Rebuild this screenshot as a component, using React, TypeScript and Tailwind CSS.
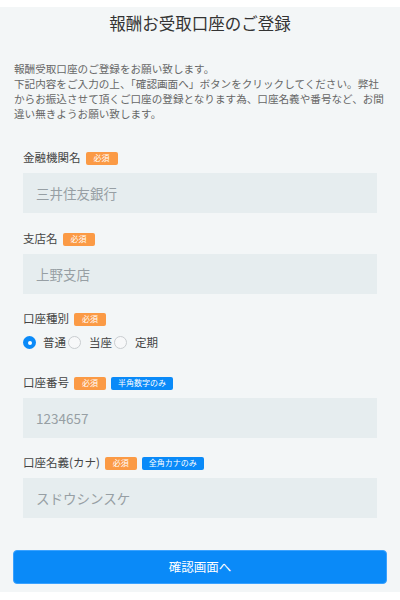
import React from "react";

const font = { fontFamily: '"Noto Sans CJK JP", "Noto Sans", sans-serif' };

function Badge({ children, tone = "orange" }: { children: React.ReactNode; tone?: "orange" | "blue" }) {
  const color = tone === "orange" ? "bg-[#fb9a45] w-[32px]" : "bg-[#0a8af8] px-[7px]";
  return (
    <span className={`${color} inline-flex h-[13px] items-center justify-center rounded-[2px] text-[8px] leading-none text-white`}>
      {children}
    </span>
  );
}

function FieldLabel({ label, badges }: { label: string; badges: React.ReactNode }) {
  return (
    <div className="flex h-[14px] items-center gap-[5px]">
      <span className="text-[11.5px] leading-none text-[#444]">{label}</span>
      {badges}
    </div>
  );
}

function Field({ label, value, extra }: { label: string; value: string; extra?: string }) {
  return (
    <div>
      <FieldLabel
        label={label}
        badges={
          <>
            <Badge>必須</Badge>
            {extra && <Badge tone="blue">{extra}</Badge>}
          </>
        }
      />
      <div className="mt-[8px] flex h-[40px] items-center bg-[#e6edef] pl-[13px] text-[13.5px] text-[#979fa4]">
        {value}
      </div>
    </div>
  );
}

function Radio({ checked }: { checked?: boolean }) {
  if (checked) {
    return (
      <span className="flex h-[13px] w-[13px] items-center justify-center rounded-full bg-[#0a8af8]">
        <span className="h-[4px] w-[4px] rounded-full bg-white" />
      </span>
    );
  }
  return <span className="h-[13px] w-[13px] rounded-full border border-[#c9cdd0] bg-[#f7f8f9]" />;
}

export default function App() {
  return (
    <div className="min-h-[600px] bg-white pt-[7px]" style={font}>
      <div className="h-[585px] bg-[#f3f6f7] pt-[3px]">
        <h1 className="text-center text-[16.5px] leading-[26px] text-[#333]">報酬お受取口座のご登録</h1>

        <p className="mt-[25px] px-[14px] text-[10.6px] leading-[15px] text-[#666]">
          <span className="block">報酬受取口座のご登録をお願い致します。</span>
          <span className="block">下記内容をご入力の上、「確認画面へ」ボタンをクリックしてください。弊社</span>
          <span className="block">からお振込させて頂くご口座の登録となります為、口座名義や番号など、お間</span>
          <span className="block">違い無きようお願い致します。</span>
        </p>

        <div className="mt-[30px] px-[23px]">
          <Field label="金融機関名" value="三井住友銀行" />

          <div className="mt-[19px]">
            <Field label="支店名" value="上野支店" />
          </div>

          <div className="mt-[18px]">
            <FieldLabel label="口座種別" badges={<Badge>必須</Badge>} />
            <div className="mt-[10px] flex items-center text-[11.5px] leading-none text-[#444]">
              <Radio checked />
              <span className="ml-[7px] mr-[2px]">普通</span>
              <Radio />
              <span className="ml-[8px] mr-[2px]">当座</span>
              <Radio />
              <span className="ml-[8px]">定期</span>
            </div>
          </div>

          <div className="mt-[27px]">
            <Field label="口座番号" value="1234657" extra="半角数字のみ" />
          </div>

          <div className="mt-[18px]">
            <Field label="口座名義(カナ)" value="スドウシンスケ" extra="全角カナのみ" />
          </div>
        </div>

        <div className="mt-[32px] px-[13px]">
          <button className="flex h-[34px] w-full items-center justify-center rounded-[4px] border border-[#3aa2ff] bg-[#0a8af8] text-[12.5px] text-white">
            確認画面へ
          </button>
        </div>
      </div>
    </div>
  );
}
